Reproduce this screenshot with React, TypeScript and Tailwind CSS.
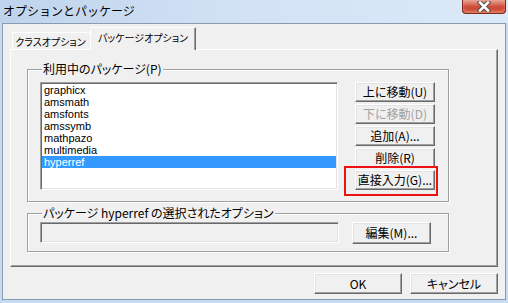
import type { ReactNode } from 'react'

const jp = "[font-family:'Noto_Sans_CJK_JP','Liberation_Sans',sans-serif] [font-feature-settings:'palt']"

const raised =
  'bg-[#f0f0f0] border border-t-white border-l-white border-r-[#696969] border-b-[#696969] shadow-[inset_-1px_-1px_0_#a0a0a0,inset_1px_1px_0_#e3e3e3]'

const sunken =
  'border border-t-[#a0a0a0] border-l-[#a0a0a0] border-r-white border-b-white shadow-[inset_1px_1px_0_#696969,inset_-1px_-1px_0_#e3e3e3]'

const Button = ({
  children,
  className = '',
  disabled = false,
}: {
  children: ReactNode
  className?: string
  disabled?: boolean
}) => (
  <div
    className={`flex items-center justify-center text-[12px] leading-none ${raised} ${
      disabled ? 'text-[#a0a0a0]' : 'text-black'
    } ${className}`}
  >
    {children}
  </div>
)

const packages = [
  'graphicx',
  'amsmath',
  'amsfonts',
  'amssymb',
  'mathpazo',
  'multimedia',
  'hyperref',
]

export default function App() {
  return (
    <div
      className={`w-[508px] h-[303px] flex flex-col overflow-hidden bg-[#c8dcf1] ${jp}`}
    >
      {/* title bar */}
      <div className="h-[23px] flex-none flex justify-between bg-gradient-to-r from-[#bfd4ec] via-[#d3e3f5] to-[#dbe9f8]">
        <div className="pl-[3px] pt-[3px] text-[12px] leading-[16px] text-black [font-feature-settings:normal]">
          オプションとパッケージ
        </div>
        <div className="mr-[2px] w-[44px] h-[14px] flex items-center justify-center rounded-b-[4px] border border-t-0 border-[#7b2a1f] bg-gradient-to-b from-[#e7a595] via-[#cf4f3b] to-[#c4402c] shadow-[inset_0_-2px_3px_rgba(255,170,140,0.6)]">
          <svg width="14" height="11" viewBox="0 0 14 11">
            <path
              d="M3 1.5 L11 9.5 M11 1.5 L3 9.5"
              stroke="#505050"
              strokeWidth="4.5"
              strokeLinecap="square"
            />
            <path
              d="M3 1.5 L11 9.5 M11 1.5 L3 9.5"
              stroke="#ffffff"
              strokeWidth="2.5"
              strokeLinecap="square"
            />
          </svg>
        </div>
      </div>

      {/* client area */}
      <div className="mx-[2px] h-[277px] flex-none flex flex-col bg-[#f0f0f0] border border-[#8a9bb0] px-[7px] pt-[3px]">
        {/* tabs */}
        <div className="h-[22px] flex items-end pl-[2px] relative z-10">
          <div className="w-[80px] h-[17px] flex items-center justify-center pr-[4px] text-[10px] leading-none bg-[#f0f0f0] border-t border-l border-white pt-[1px]">
            クラスオプション
          </div>
          <div className="-ml-[2px] w-[106px] h-[23px] -mb-[1px] flex items-start justify-center pt-[5px] text-[10px] leading-none bg-[#f0f0f0] border-t border-l border-white border-r border-r-[#696969] shadow-[inset_-1px_0_0_#a0a0a0]">
            パッケージオプション
          </div>
        </div>

        {/* tab panel */}
        <div className="w-[488px] h-[218px] flex-none flex flex-col border border-t-white border-l-white border-r-[#696969] border-b-[#696969] shadow-[inset_-1px_-1px_0_#a0a0a0]">
          <fieldset className="ml-[16px] mt-[12px] w-[422px] border border-[#a0a0a0] shadow-[inset_1px_1px_0_white,1px_1px_0_white] pl-[12px] pr-[13px] pt-[6px] pb-[11px]">
            <legend className="ml-[2px] px-[1px] bg-[#f0f0f0] text-[12px] leading-[14px]">
              利用中のパッケージ(P)
            </legend>
            <div className="flex gap-[17px]">
              <div className={`w-[298px] h-[108px] bg-white p-[1px] ${sunken}`}>
                {packages.map((p) => (
                  <div
                    key={p}
                    className={`h-[12px] pl-[2px] text-[11px] leading-[12px] [font-family:'Liberation_Sans',sans-serif] ${
                      p === 'hyperref' ? 'bg-[#3399ff] text-white' : 'text-black'
                    }`}
                  >
                    {p}
                  </div>
                ))}
              </div>
              <div className="w-[80px] flex flex-col gap-[2px]">
                <Button className="h-[20px]">上に移動(U)</Button>
                <Button className="h-[20px]" disabled>
                  下に移動(D)
                </Button>
                <Button className="h-[20px]">追加(A)...</Button>
                <Button className="h-[20px]">削除(R)</Button>
                <div className="relative">
                  <Button className="h-[20px]">直接入力(G)...</Button>
                  <div className="absolute -left-[11px] -right-[3px] -top-[4px] -bottom-[6px] border-2 border-[#ee1111]" />
                </div>
              </div>
            </div>
          </fieldset>

          <fieldset className="ml-[16px] mt-[4px] w-[422px] border border-[#a0a0a0] shadow-[inset_1px_1px_0_white,1px_1px_0_white] pl-[12px] pt-[2px] pb-[7px]">
            <legend className="ml-[2px] px-[1px] bg-[#f0f0f0] text-[12px] leading-[14px]">
              パッケージ hyperref の選択されたオプション
            </legend>
            <div className="flex gap-[13px]">
              <div className={`w-[299px] h-[21px] bg-[#f0f0f0] ${sunken}`} />
              <Button className="w-[79px] h-[22px]">編集(M)...</Button>
            </div>
          </fieldset>
        </div>

        {/* dialog buttons */}
        <div className="mt-[6px] flex justify-end gap-[8px]">
          <Button className="w-[88px] h-[21px]">OK</Button>
          <Button className="w-[88px] h-[21px]">キャンセル</Button>
        </div>
      </div>
    </div>
  )
}
